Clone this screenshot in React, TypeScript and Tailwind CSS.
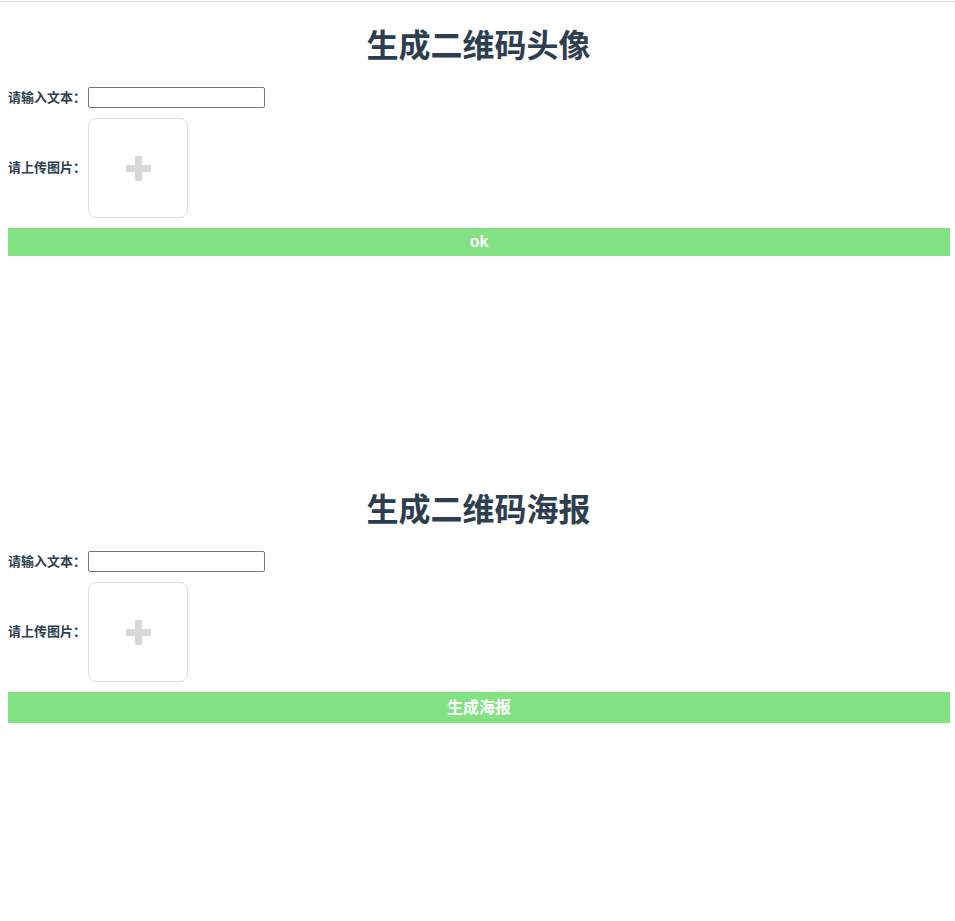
import React from "react";

const font = { fontFamily: '"Liberation Sans", "Noto Sans CJK SC", sans-serif' };

function Section({ title, button, btnH }: { title: string; button: string; btnH: string }) {
  return (
    <div>
      <h1 className="h-[40px] leading-[40px] text-center text-[32px] font-bold text-[#2c3e50] pl-[2px]">{title}</h1>
      <div className="mt-[21px] flex items-center pl-[8px]">
        <span className="w-[80px] text-[13px] font-bold text-[#2c3e50] leading-[16px] whitespace-nowrap">请输入文本：</span>
        <input type="text" className="w-[177px] h-[21px] border border-[#767676] rounded-[2px] bg-white outline-none" />
      </div>
      <div className="mt-[10px] flex items-center pl-[8px]">
        <span className="w-[80px] text-[13px] font-bold text-[#2c3e50] leading-[16px] whitespace-nowrap">请上传图片：</span>
        <div className="w-[100px] h-[100px] border border-[#dcdcdc] rounded-[8px] flex items-center justify-center">
          <div className="relative w-[25px] h-[25px]">
            <div className="absolute left-0 top-[9px] w-[25px] h-[7px] bg-[#d8d8d8]" />
            <div className="absolute left-[9px] top-0 w-[7px] h-[25px] bg-[#d8d8d8]" />
          </div>
        </div>
      </div>
      <div className="mt-[10px] pl-[8px] pr-[5px]">
        <div className={`${btnH} bg-[#82e283] flex items-center justify-center text-white font-bold text-[16px]`}>{button}</div>
      </div>
    </div>
  );
}

export default function App() {
  return (
    <div className="min-h-[921px] bg-white" style={font}>
      <div className="h-[1px]" />
      <div className="h-[1px] bg-[#dddddd]" />
      <div className="h-[24px]" />
      <Section title="生成二维码头像" button="ok" btnH="h-[28px]" />
      <div className="h-[234px]" />
      <Section title="生成二维码海报" button="生成海报" btnH="h-[31px]" />
    </div>
  );
}
